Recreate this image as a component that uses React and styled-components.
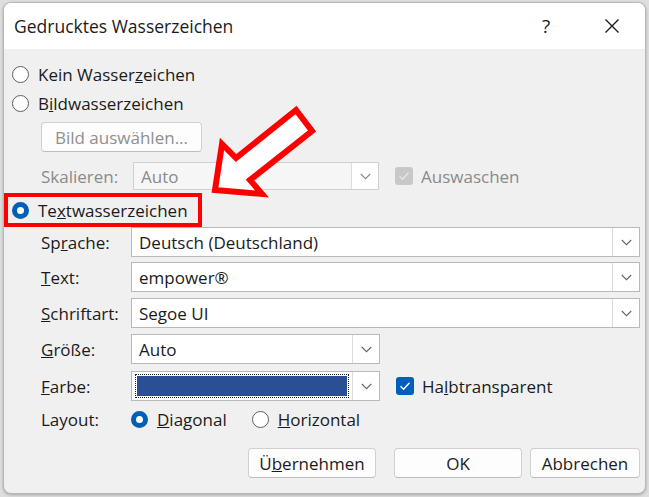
import React from "react";
import styled, { createGlobalStyle, css } from "styled-components";

const GlobalStyle = createGlobalStyle`
  html, body { margin: 0; padding: 0; background: #dedede; }
  body {
    font-family: "Open Sans", "Noto Sans", sans-serif;
    color: #1b1b1b;
  }
  #root { width: 649px; height: 497px; }
`;

const Page = styled.div`
  position: relative;
  width: 649px;
  height: 497px;
  padding: 2px 3px 3px 3px;
  box-sizing: border-box;
`;

const Dialog = styled.div`
  width: 643px;
  height: 492px;
  box-sizing: border-box;
  border: 1px solid #b7b7b7;
  border-radius: 8px;
  overflow: hidden;
  background: #f0f0f0;
  box-shadow: 0 1px 3px rgba(0, 0, 0, 0.25);
  display: flex;
  flex-direction: column;
`;

const TitleBar = styled.div`
  height: 46px;
  background: #ffffff;
  display: flex;
  align-items: center;
  padding-left: 10px;
  font-size: 17.5px;
  flex: none;
`;

const Title = styled.div`
  flex: 1;
`;

const TitleButton = styled.div`
  width: 66px;
  height: 46px;
  display: flex;
  align-items: center;
  justify-content: center;
  font-size: 19px;
  color: #1b1b1b;
`;

const Body = styled.div`
  flex: 1;
  display: flex;
  flex-direction: column;
  padding: 0 5px 0 8px;
`;

const Stack = styled.div`
  display: flex;
  align-items: center;
  margin-top: ${(p) => p.$mt || 0}px;
  margin-left: ${(p) => p.$ml || 0}px;
`;

const RadioLabel = styled.label`
  display: flex;
  align-items: center;
  gap: 9px;
  height: 24px;
  font-size: 17px;
  color: ${(p) => (p.$disabled ? "#8a8a8a" : "#1b1b1b")};
  white-space: nowrap;
`;

const RadioCircle = styled.span`
  width: 17px;
  height: 17px;
  box-sizing: border-box;
  border-radius: 50%;
  flex: none;
  display: block;
  ${(p) =>
    p.$checked
      ? css`
          border: 5px solid #005fb8;
          background: #ffffff;
        `
      : css`
          background: #ffffff;
          border: 1px solid #5f5f5f;
        `}
`;

const HighlightBox = styled.div`
  margin-left: -8px;
  width: 198px;
  height: 34px;
  box-sizing: border-box;
  border: 4px solid #ff0000;
  display: flex;
  align-items: center;
  padding-left: 4px;
`;

const Button = styled.button`
  height: 30px;
  width: ${(p) => p.$w}px;
  box-sizing: border-box;
  border: 1px solid #d0d0d0;
  border-bottom-color: #bdbdbd;
  border-radius: 4px;
  background: #fdfdfd;
  font-family: inherit;
  font-size: 17px;
  color: ${(p) => (p.$disabled ? "#8f8f8f" : "#1b1b1b")};
  padding: 0;
  display: flex;
  align-items: center;
  justify-content: center;
`;

const FieldRow = styled.div`
  display: flex;
  align-items: center;
  margin-top: ${(p) => p.$mt || 0}px;
  padding-left: 29px;
  height: ${(p) => p.$h || 30}px;
`;

const FieldLabel = styled.span`
  width: ${(p) => p.$w || 90}px;
  flex: none;
  font-size: 17px;
  color: ${(p) => (p.$disabled ? "#8a8a8a" : "#1b1b1b")};
  white-space: nowrap;
`;

const Combo = styled.div`
  width: ${(p) => (p.$w ? `${p.$w}px` : "auto")};
  flex: ${(p) => (p.$w ? "none" : "1")};
  height: ${(p) => p.$h || 30}px;
  box-sizing: border-box;
  border: 1px solid ${(p) => (p.$disabled ? "#cfcfcf" : "#b9b9b9")};
  background: ${(p) => (p.$disabled ? "#f6f6f6" : "#ffffff")};
  display: flex;
  align-items: stretch;
`;

const ComboValue = styled.div`
  flex: 1;
  display: flex;
  align-items: center;
  padding-left: 7px;
  font-size: 17px;
  color: ${(p) => (p.$disabled ? "#8a8a8a" : "#1b1b1b")};
  white-space: nowrap;
  overflow: hidden;
`;

const ColorValue = styled.div`
  flex: 1;
  padding: 2px 3px 2px 3px;
  display: flex;
`;

const FocusRing = styled.div`
  flex: 1;
  border: 1px dotted #222;
  padding: 1px;
  display: flex;
`;

const Swatch = styled.div`
  flex: 1;
  background: #2b4f95;
`;

const DropButton = styled.div`
  width: 26px;
  flex: none;
  border-left: 1px solid #dcdcdc;
  background: #ffffff;
  display: flex;
  align-items: center;
  justify-content: center;
`;

const CheckLabel = styled.label`
  display: flex;
  align-items: center;
  gap: 8px;
  margin-left: 16px;
  font-size: 17px;
  color: ${(p) => (p.$disabled ? "#8a8a8a" : "#1b1b1b")};
  white-space: nowrap;
`;

const CheckBox = styled.span`
  width: 18px;
  height: 18px;
  border-radius: 3px;
  background: ${(p) => (p.$disabled ? "#c8c8c8" : "#005fb8")};
  display: flex;
  align-items: center;
  justify-content: center;
  flex: none;
`;

const LayoutRow = styled.div`
  display: flex;
  align-items: center;
  height: 24px;
  margin-top: 6px;
  padding-left: 29px;
`;

const RadioGroup = styled.div`
  display: flex;
  align-items: center;
  gap: 25px;
`;

const ButtonBar = styled.div`
  display: flex;
  justify-content: flex-end;
  margin-top: 17px;
`;

const ButtonGap = styled.span`
  width: ${(p) => p.$w}px;
  flex: none;
`;

const Overlay = styled.svg`
  position: absolute;
  left: 0;
  top: 0;
  width: 649px;
  height: 497px;
  pointer-events: none;
`;

const Chevron = ({ color = "#666" }) => (
  <svg width="11" height="7" viewBox="0 0 11 7">
    <path d="M0.8 1 L5.5 5.7 L10.2 1" fill="none" stroke={color} strokeWidth="1.1" />
  </svg>
);

const Check = ({ color = "#fff" }) => (
  <svg width="12" height="10" viewBox="0 0 12 10">
    <path d="M1.5 5.2 L4.6 8.2 L10.5 1.8" fill="none" stroke={color} strokeWidth="1.4" />
  </svg>
);

const CloseIcon = () => (
  <svg width="16" height="16" viewBox="0 0 16 16">
    <path d="M1.5 1.5 L14.5 14.5 M14.5 1.5 L1.5 14.5" stroke="#1b1b1b" strokeWidth="1.4" />
  </svg>
);

const Radio = ({ checked, children, disabled }) => (
  <RadioLabel $disabled={disabled}>
    <RadioCircle $checked={checked} />
    <span>{children}</span>
  </RadioLabel>
);

export default function App() {
  return (
    <>
      <GlobalStyle />
      <Page>
        <Dialog>
          <TitleBar>
            <Title>Gedrucktes Wasserzeichen</Title>
            <TitleButton>?</TitleButton>
            <TitleButton>
              <CloseIcon />
            </TitleButton>
          </TitleBar>
          <Body>
            <Stack $mt={13}>
              <Radio>
                Kein Wasser<u>z</u>eichen
              </Radio>
            </Stack>
            <Stack $mt={5}>
              <Radio>
                B<u>i</u>ldwasserzeichen
              </Radio>
            </Stack>
            <Stack $mt={7} $ml={29}>
              <Button $w={161} $disabled>
                Bild auswählen...
              </Button>
            </Stack>
            <FieldRow $mt={10} $h={28}>
              <FieldLabel $w={92} $disabled>
                Skalieren:
              </FieldLabel>
              <Combo $w={246} $h={28} $disabled>
                <ComboValue $disabled>Auto</ComboValue>
                <DropButton>
                  <Chevron color="#8a8a8a" />
                </DropButton>
              </Combo>
              <CheckLabel $disabled>
                <CheckBox $disabled>
                  <Check color="#e6e6e6" />
                </CheckBox>
                Auswaschen
              </CheckLabel>
            </FieldRow>
            <Stack $mt={3}>
              <HighlightBox>
                <Radio checked>
                  Te<u>x</u>twasserzeichen
                </Radio>
              </HighlightBox>
            </Stack>
            <FieldRow $mt={0}>
              <FieldLabel>
                Sp<u>r</u>ache:
              </FieldLabel>
              <Combo>
                <ComboValue>Deutsch (Deutschland)</ComboValue>
                <DropButton>
                  <Chevron />
                </DropButton>
              </Combo>
            </FieldRow>
            <FieldRow $mt={5}>
              <FieldLabel>
                <u>T</u>ext:
              </FieldLabel>
              <Combo>
                <ComboValue>empower®</ComboValue>
                <DropButton>
                  <Chevron />
                </DropButton>
              </Combo>
            </FieldRow>
            <FieldRow $mt={6}>
              <FieldLabel>
                <u>S</u>chriftart:
              </FieldLabel>
              <Combo>
                <ComboValue>Segoe UI</ComboValue>
                <DropButton>
                  <Chevron />
                </DropButton>
              </Combo>
            </FieldRow>
            <FieldRow $mt={6}>
              <FieldLabel>
                <u>G</u>röße:
              </FieldLabel>
              <Combo $w={249}>
                <ComboValue>Auto</ComboValue>
                <DropButton>
                  <Chevron />
                </DropButton>
              </Combo>
            </FieldRow>
            <FieldRow $mt={7}>
              <FieldLabel>
                <u>F</u>arbe:
              </FieldLabel>
              <Combo $w={249}>
                <ColorValue>
                  <FocusRing>
                    <Swatch />
                  </FocusRing>
                </ColorValue>
                <DropButton>
                  <Chevron />
                </DropButton>
              </Combo>
              <CheckLabel>
                <CheckBox>
                  <Check />
                </CheckBox>
                <span>
                  Ha<u>l</u>btransparent
                </span>
              </CheckLabel>
            </FieldRow>
            <LayoutRow>
              <FieldLabel>Layout:</FieldLabel>
              <RadioGroup>
                <Radio checked>
                  <u>D</u>iagonal
                </Radio>
                <Radio>
                  <u>H</u>orizontal
                </Radio>
              </RadioGroup>
            </LayoutRow>
            <ButtonBar>
              <Button $w={128}>
                <span>
                  Ü<u>b</u>ernehmen
                </span>
              </Button>
              <ButtonGap $w={18} />
              <Button $w={128}>OK</Button>
              <ButtonGap $w={8} />
              <Button $w={110}>Abbrechen</Button>
            </ButtonBar>
          </Body>
        </Dialog>
        <Overlay viewBox="0 0 649 497">
          <polygon
            points="296,110 236,158 222,144 215,190 262,194 250,180 312,131"
            fill="#ffffff"
            stroke="#ff0000"
            strokeWidth="6"
            strokeLinejoin="miter"
          />
        </Overlay>
      </Page>
    </>
  );
}
